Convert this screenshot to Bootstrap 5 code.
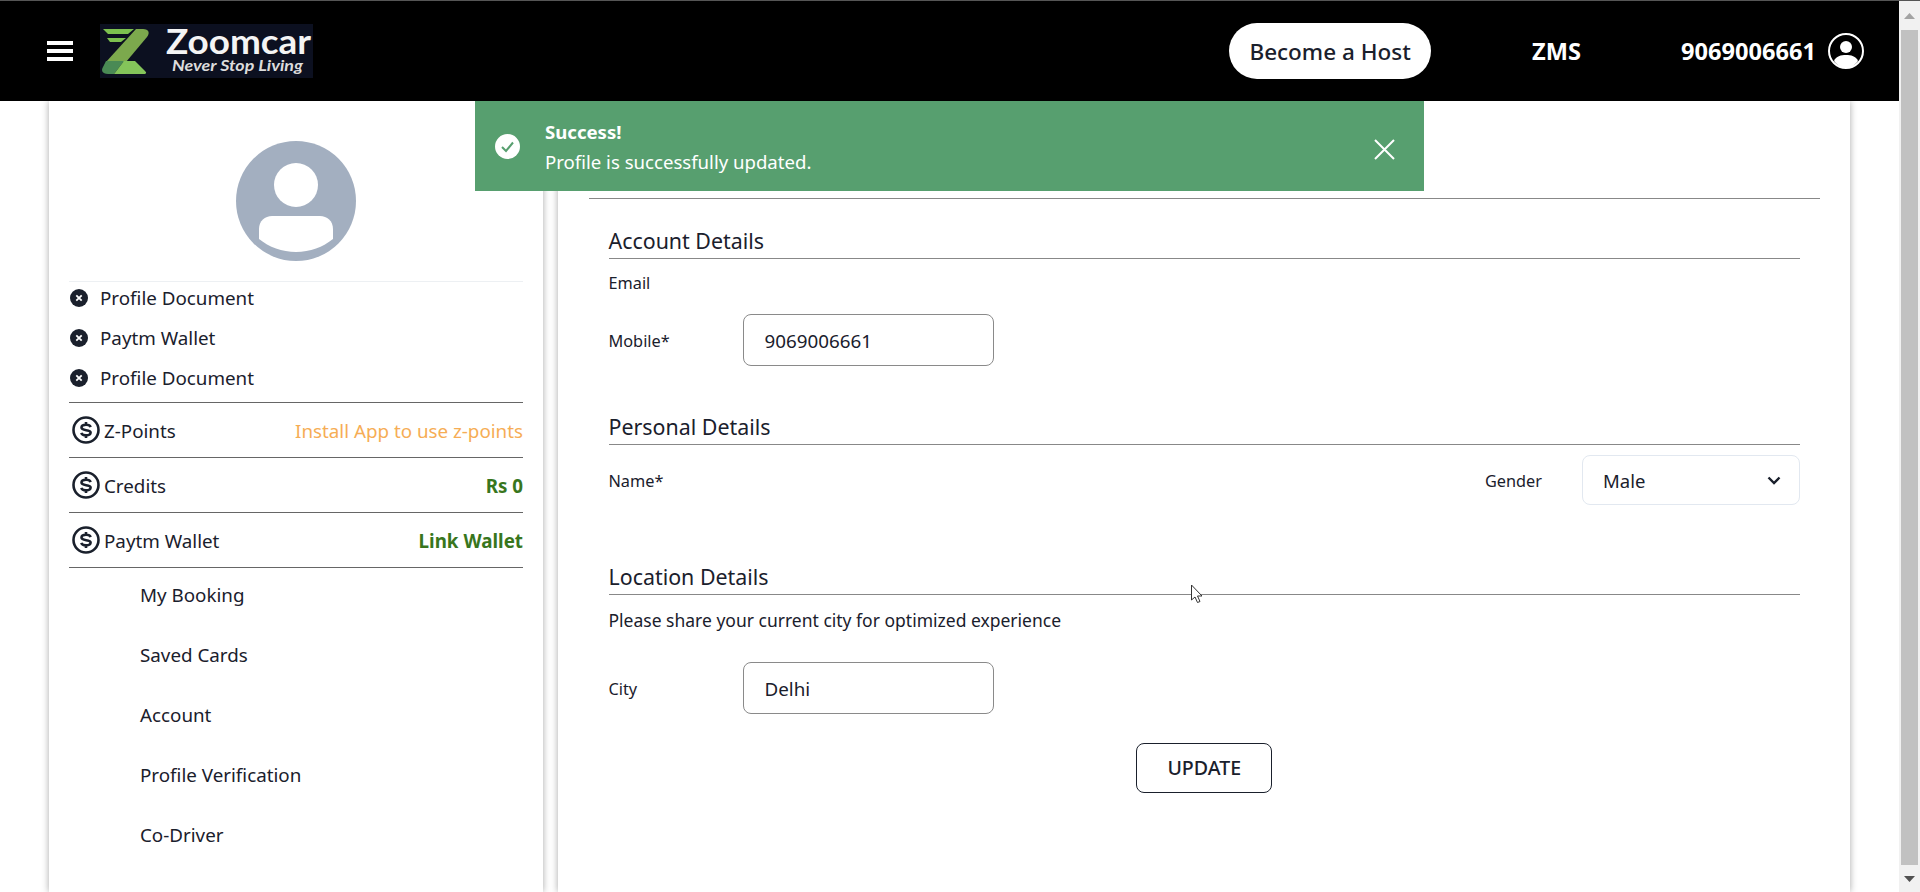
<!DOCTYPE html>
<html lang="en">
<head>
  <meta charset="UTF-8" />
  <meta name="viewport" content="width=device-width, initial-scale=1.0"/>
  <title>Profile - Zoomcar</title>
  <link href="https://cdn.jsdelivr.net/npm/bootstrap@5.3.3/dist/css/bootstrap.min.css" rel="stylesheet" />
  <style>
    body {
      font-family: "Noto Sans", "Open Sans", sans-serif;
      color: #1a202c;
      font-size: 16px;
    }

    .app-shell { height: 892px; }
    .app-page { width: 1899px; }

    /* header */
    .top-bar {
      height: 101px;
      background: #000;
      border-top: 1px solid #555;
      padding: 0 35px 0 47px;
      z-index: 3;
    }
    .burger { width: 26px; margin-right: 27px; }
    .burger span { display: block; height: 4px; background: #fff; margin-bottom: 4px; }
    .burger span:last-child { margin-bottom: 0; }
    .brand-logo { display: block; width: 213px; height: 54px; background: #0c1020; overflow: visible; }
    .host-btn {
      width: 202px;
      height: 56px;
      border-radius: 28px;
      font-size: 22.5px;
      font-weight: 500;
      color: #1a202c;
      background: #fff;
      margin-right: 101px;
      padding: 2px 0 0;
    }
    .top-link { color: #fff; font-size: 23.6px; font-weight: 700; padding-top: 2px; }
    .zms-link { margin-right: 100px; }
    .user-icon { margin-left: 12px; }

    /* page columns */
    .page-body { padding: 0 49px; gap: 14.5px; min-height: 0; }
    .side-panel, .main-panel { background: #fff; box-shadow: 0 0 7px rgba(0, 0, 0, .35); }
    .side-panel { width: 494px; padding: 40px 20px 0; font-size: 18.8px; }
    .main-panel { width: 1292.5px; padding: 97px 30px 0 31px; }

    .avatar-wrap { padding-bottom: 20px; border-bottom: 1px solid #edf0f3; }
    .doc-list { gap: 8px; margin: 0 0 8px; padding: 0; list-style: none; }
    .doc-list li { height: 32px; padding-left: 1px; }
    .doc-list svg { margin-right: 12px; }

    .wallet-row { height: 55px; border-bottom: 1px solid #666; padding-left: 3px; }
    .wallet-row.first-row { border-top: 1px solid #666; height: 56px; }
    .wallet-row svg { margin-right: 4px; }
    .wallet-row span { padding-top: 2px; }
    .note-orange { color: #f6ad55; }
    .note-green { color: #38761d; font-weight: 700; }

    .side-menu { gap: 28px; margin: 11px 0 0; padding: 0 0 0 71px; list-style: none; }
    .side-menu li { height: 32px; line-height: 32px; }

    /* form */
    .form-wrap { border-top: 1px solid #888; padding: 0 20px; }
    .block-head {
      font-size: 21.4px;
      line-height: 30px;
      padding-bottom: 2px;
      border-bottom: 1px solid #888;
    }
    .head-account { margin-top: 27px; }
    .head-personal { margin-top: 46px; }
    .head-location { margin-top: 57px; }
    .field-label { font-size: 16.3px; line-height: 24px; }
    .label-wide { width: 134px; }
    .form-wrap label, .form-wrap .name-label { padding-top: 2px; }
    .email-line { margin-top: 12px; }
    .mobile-line { margin-top: 19px; }
    .personal-line { margin-top: 10px; }
    .hint-line { margin-top: 12.5px; font-size: 17.5px; }
    .city-line { margin-top: 30.5px; }
    .gender-label { width: 97px; }

    .text-field {
      width: 251px;
      height: 52px;
      border: 1px solid #8a8a8a;
      border-radius: 8px;
      padding: 2px 21px 0;
      font-size: 18.8px;
      color: #1a202c;
    }
    .gender-select {
      width: 218px;
      height: 50px;
      border: 1px solid #e2e8f0;
      border-radius: 8px;
      padding: 1px 20px 0;
      font-size: 18.5px;
      color: #1a202c;
      background-size: 14px 14px;
      background-position: right 18px center;
      background-image: url("data:image/svg+xml,%3csvg xmlns='http://www.w3.org/2000/svg' viewBox='0 0 14 14'%3e%3cpath fill='none' stroke='%231a202c' stroke-width='2.4' d='M1.5 4.5 7 10l5.5-5.5'/%3e%3c/svg%3e");
    }
    .update-line { margin-top: 29px; }
    .update-btn {
      width: 136px;
      height: 50px;
      border: 1px solid #1a202c;
      border-radius: 8px;
      font-size: 19.6px;
      font-weight: 500;
      color: #1a202c;
      padding: 0;
    }

    /* success message, over the page */
    .notice-bar {
      top: 101px;
      left: 475px;
      width: 949px;
      height: 90px;
      background: #579f6f;
      color: #fff;
      font-size: 18.6px;
      padding: 0 29px 0 20px;
      z-index: 4;
    }
    .notice-bar svg.notice-icon { margin-right: 25px; }
    .notice-text { line-height: 30px; padding-top: 2px; }
    .notice-close { background: none; border: 0; padding: 0; line-height: 0; margin-top: 6px; }

    .mouse-pointer { top: 584px; left: 1190px; z-index: 5; }

    /* scroll bar column */
    .scroll-col { width: 21px; background: #f1f1f1; border-top: 1px solid #555; }
    .scroll-thumb { width: 17px; height: 835px; background: #c1c1c1; margin: 0 auto; }
    .scroll-btn { height: 29px; }
    .scroll-btn-down { height: 27px; }
  </style>
</head>
<body>
  <div class="app-shell d-flex overflow-hidden position-relative">
    <div class="app-page d-flex flex-column">
      <!-- Header -->
      <header class="top-bar d-flex align-items-center position-relative">
        <div class="burger"><span></span><span></span><span></span></div>
        <svg class="brand-logo" viewBox="0 0 213 54">
          <path fill="#7cc04f" d="M3 5h31l-6 5H8z"/>
          <path fill="#7cc04f" d="M7 14h19l-5 4H10z"/>
          <path fill="#7ca94d" d="M36 5h7c6 0 7 4 4 8L26 38H6z"/>
          <path fill="#4a8a55" d="M6 37h18L14 50H8c-6 0-7-4-5-7z"/>
          <path fill="#84c45a" d="M24 37h11l10 10c2 2 1 3-1 3H14z"/>
          <text x="66" y="30" font-family="Lato, sans-serif" font-weight="700" font-size="35" fill="#f4f4f4" textLength="145" lengthAdjust="spacingAndGlyphs">Zoomcar</text>
          <text x="72" y="46.500" font-family="Lato, sans-serif" font-style="italic" font-weight="700" font-size="15" fill="#dcdcdc" textLength="131" lengthAdjust="spacingAndGlyphs">Never Stop Living</text>
        </svg>
        <div class="ms-auto d-flex align-items-center">
          <button type="button" class="btn host-btn">Become a Host</button>
          <span class="top-link zms-link">ZMS</span>
          <span class="top-link">9069006661</span>
          <svg class="user-icon" width="36" height="36" viewBox="0 0 36 36">
            <circle cx="18" cy="18" r="17" fill="none" stroke="#fff" stroke-width="2"/>
            <circle cx="18" cy="14" r="6" fill="#fff"/>
            <path fill="#fff" d="M6 28c2-5 7-6 12-6s10 1 12 6c-3 4-7 7-12 7s-9-3-12-7z"/>
          </svg>
        </div>
      </header>

      <div class="page-body d-flex flex-grow-1 overflow-hidden">
        <!-- Left panel -->
        <aside class="side-panel">
          <div class="avatar-wrap d-flex justify-content-center">
            <svg width="120" height="120" viewBox="0 0 120 120">
              <circle cx="60" cy="60" r="60" fill="#a3afc0"/>
              <circle cx="60" cy="44" r="22" fill="#fff"/>
              <path fill="#fff" d="M23 88c0-8 6-13 13-13h48c7 0 13 5 13 13v10c-10 8-23 13-37 13s-27-5-37-13z"/>
            </svg>
          </div>
          <ul class="doc-list d-flex flex-column">
            <li class="d-flex align-items-center">
              <svg width="18" height="18" viewBox="0 0 18 18"><circle cx="9" cy="9" r="9" fill="#1a202c"/><path stroke="#fff" stroke-width="1.8" d="m6.300 6.300 5.400 5.400m0-5.400-5.400 5.400"/></svg>
              Profile Document
            </li>
            <li class="d-flex align-items-center">
              <svg width="18" height="18" viewBox="0 0 18 18"><circle cx="9" cy="9" r="9" fill="#1a202c"/><path stroke="#fff" stroke-width="1.8" d="m6.300 6.300 5.400 5.400m0-5.400-5.400 5.400"/></svg>
              Paytm Wallet
            </li>
            <li class="d-flex align-items-center">
              <svg width="18" height="18" viewBox="0 0 18 18"><circle cx="9" cy="9" r="9" fill="#1a202c"/><path stroke="#fff" stroke-width="1.8" d="m6.300 6.300 5.400 5.400m0-5.400-5.400 5.400"/></svg>
              Profile Document
            </li>
          </ul>
          <div class="wallet-row first-row d-flex align-items-center">
            <svg width="28" height="28" viewBox="0 0 28 28"><circle cx="14" cy="14" r="12.5" fill="none" stroke="#1a202c" stroke-width="2.6"/><path fill="none" stroke="#1a202c" stroke-width="2.6" d="M18.600 11.200c-.5-1.600-2.200-2.400-4.600-2.400-2.700 0-4.500 1.100-4.500 2.800 0 3.900 9.100 1.300 9.100 5 0 1.700-1.900 2.800-4.600 2.800-2.500 0-4.200-.9-4.700-2.500M14 6v3M14 19v3"/></svg>
            <span>Z-Points</span>
            <span class="ms-auto note-orange">Install App to use z-points</span>
          </div>
          <div class="wallet-row d-flex align-items-center">
            <svg width="28" height="28" viewBox="0 0 28 28"><circle cx="14" cy="14" r="12.5" fill="none" stroke="#1a202c" stroke-width="2.6"/><path fill="none" stroke="#1a202c" stroke-width="2.6" d="M18.600 11.200c-.5-1.600-2.200-2.400-4.600-2.400-2.700 0-4.500 1.100-4.500 2.800 0 3.900 9.100 1.300 9.100 5 0 1.700-1.900 2.800-4.600 2.800-2.500 0-4.200-.9-4.700-2.500M14 6v3M14 19v3"/></svg>
            <span>Credits</span>
            <span class="ms-auto note-green">Rs 0</span>
          </div>
          <div class="wallet-row d-flex align-items-center">
            <svg width="28" height="28" viewBox="0 0 28 28"><circle cx="14" cy="14" r="12.5" fill="none" stroke="#1a202c" stroke-width="2.6"/><path fill="none" stroke="#1a202c" stroke-width="2.6" d="M18.600 11.200c-.5-1.600-2.200-2.400-4.600-2.400-2.700 0-4.500 1.100-4.500 2.800 0 3.900 9.100 1.300 9.100 5 0 1.700-1.900 2.800-4.600 2.800-2.500 0-4.200-.9-4.700-2.500M14 6v3M14 19v3"/></svg>
            <span>Paytm Wallet</span>
            <span class="ms-auto note-green">Link Wallet</span>
          </div>
          <ul class="side-menu d-flex flex-column">
            <li>My Booking</li>
            <li>Saved Cards</li>
            <li>Account</li>
            <li>Profile Verification</li>
            <li>Co-Driver</li>
          </ul>
        </aside>

        <!-- Right panel -->
        <main class="main-panel">
          <div class="form-wrap">
            <div class="block-head head-account">Account Details</div>
            <div class="field-label email-line">Email</div>
            <div class="d-flex align-items-center mobile-line">
              <label class="field-label label-wide" for="mobileInput">Mobile*</label>
              <input id="mobileInput" class="form-control text-field" type="text" value="9069006661" />
            </div>

            <div class="block-head head-personal">Personal Details</div>
            <div class="d-flex align-items-center personal-line">
              <span class="field-label name-label">Name*</span>
              <label class="field-label gender-label ms-auto" for="genderSelect">Gender</label>
              <select id="genderSelect" class="form-select gender-select">
                <option>Male</option>
                <option>Female</option>
              </select>
            </div>

            <div class="block-head head-location">Location Details</div>
            <div class="field-label hint-line">Please share your current city for optimized experience</div>
            <div class="d-flex align-items-center city-line">
              <label class="field-label label-wide" for="cityInput">City</label>
              <input id="cityInput" class="form-control text-field" type="text" value="Delhi" />
            </div>
            <div class="d-flex justify-content-center update-line">
              <button type="button" class="btn update-btn">UPDATE</button>
            </div>
          </div>
        </main>
      </div>
    </div>

    <!-- Scroll bar -->
    <div class="scroll-col d-flex flex-column">
      <div class="scroll-btn d-flex align-items-center justify-content-center">
        <svg width="11" height="6" viewBox="0 0 11 6"><path fill="#a3a3a3" d="M5.500 0 11 6H0z"/></svg>
      </div>
      <div class="scroll-thumb"></div>
      <div class="scroll-btn-down d-flex align-items-center justify-content-center">
        <svg width="11" height="6" viewBox="0 0 11 6"><path fill="#505050" d="M0 0h11L5.500 6z"/></svg>
      </div>
    </div>

    <!-- Success message -->
    <div class="notice-bar position-absolute d-flex align-items-center">
      <svg class="notice-icon" width="25" height="25" viewBox="0 0 25 25">
        <circle cx="12.500" cy="12.500" r="12.500" fill="#fff"/>
        <path fill="none" stroke="#579f6f" stroke-width="2" d="m7 13 4 4 7-8.500"/>
      </svg>
      <div class="notice-text">
        <div class="fw-bold">Success!</div>
        <div>Profile is successfully updated.</div>
      </div>
      <button type="button" class="notice-close ms-auto" aria-label="Close">
        <svg width="21" height="21" viewBox="0 0 21 21"><path stroke="#fff" stroke-width="2" d="m1 1 19 19M20 1 1 20"/></svg>
      </button>
    </div>

    <!-- Mouse pointer -->
    <svg class="mouse-pointer position-absolute" width="14" height="20" viewBox="0 0 14 20">
      <path fill="#fff" stroke="#333" stroke-width="1" d="M1.500 1v15l3.500-3 2.500 5.500 2.500-1-2.500-5.500h4.500z"/>
    </svg>
  </div>

  <script src="https://cdn.jsdelivr.net/npm/bootstrap@5.3.3/dist/js/bootstrap.bundle.min.js"></script>
</body>
</html>
